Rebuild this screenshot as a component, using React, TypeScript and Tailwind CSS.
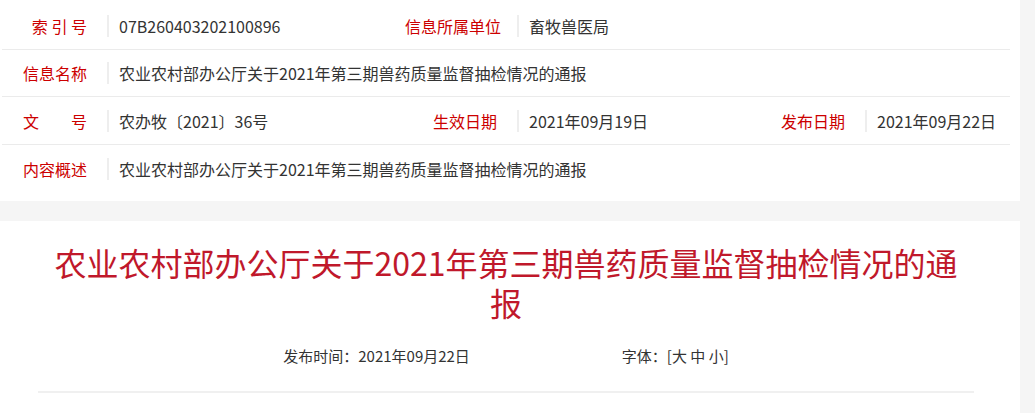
const font = { fontFamily: '"Noto Sans CJK SC", "Noto Sans", sans-serif' }

function Label({ text, w }: { text: string; w: string }) {
  return (
    <div className={`${w} shrink-0 pr-[20px] text-right text-[16px] text-[#cc0000] whitespace-pre`}>
      {text}
    </div>
  )
}

function Value({ text, w }: { text: string; w: string }) {
  return (
    <div className={`${w} flex items-center`}>
      <span className="h-[22px] w-[2px] shrink-0 bg-[#eeeeee]" />
      <span className="pl-[10px] text-[16px] text-[#333333] whitespace-nowrap">{text}</span>
    </div>
  )
}

export default function App() {
  const title = '农业农村部办公厅关于2021年第三期兽药质量监督抽检情况的通报'

  return (
    <div className="min-h-[413px] w-[1035px] bg-[#f5f5f5]" style={font}>
      {/* info table */}
      <div className="w-[1020px] bg-white pt-[3px] pr-[10px] pl-[2px]">
        <div className="flex h-[47px] items-center border-b border-[#ebebeb]">
          <Label text="索 引 号" w="w-[105px]" />
          <Value text="07B260403202100896" w="w-[298px]" />
          <Label text="信息所属单位" w="w-[112px]" />
          <Value text="畜牧兽医局" w="flex-1" />
        </div>
        <div className="flex h-[47px] items-center border-b border-[#ebebeb]">
          <Label text="信息名称" w="w-[105px]" />
          <Value text={title} w="flex-1" />
        </div>
        <div className="flex h-[48px] items-center border-b border-[#ebebeb]">
          <Label text="文　　号" w="w-[105px]" />
          <Value text="农办牧〔2021〕36号" w="w-[298px]" />
          <Label text="生效日期" w="w-[112px]" />
          <Value text="2021年09月19日" w="w-[236px]" />
          <Label text="发布日期" w="w-[112px]" />
          <Value text="2021年09月22日" w="flex-1" />
        </div>
        <div className="flex h-[48px] items-center">
          <Label text="内容概述" w="w-[105px]" />
          <Value text={title} w="flex-1" />
        </div>
        <div className="h-[8px]" />
      </div>

      {/* article */}
      <div className="mt-[20px] w-[1020px] bg-white pt-[21px] pb-[20px]">
        <div className="mx-[38px] w-[936px]">
          <h1 className="px-[12px] text-center text-[32px] leading-[40px] font-normal text-[#c0182b]">
            {title}
          </h1>
          <div className="mt-[24px] flex justify-center gap-[152px] text-[15px] leading-[20px] text-[#333333]">
            <span>发布时间：2021年09月22日</span>
            <span>字体：[大 中 小]</span>
          </div>
          <div className="mt-[25px] h-[2px] bg-[#f0f0f0]" />
        </div>
      </div>
    </div>
  )
}
